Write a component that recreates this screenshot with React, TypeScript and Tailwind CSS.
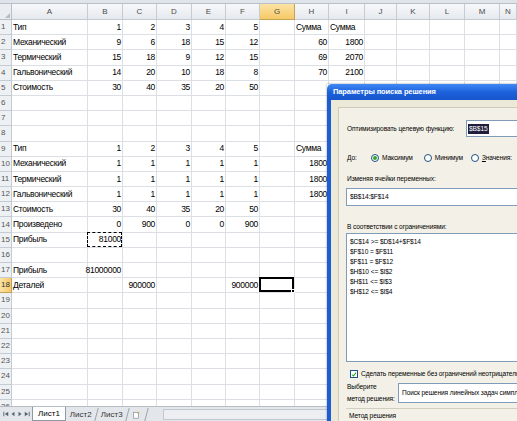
import React from "react";

type Cell = { v: string; text?: boolean };

const COLS = ["A", "B", "C", "D", "E", "F", "G", "H", "I", "J", "K", "L", "M", "N"];

const n = (v: string): Cell => ({ v });
const t = (v: string): Cell => ({ v, text: true });

// sheet contents, by row number
const sheet: Record<number, Record<string, Cell>> = {
  1: { A: t("Тип"), B: n("1"), C: n("2"), D: n("3"), E: n("4"), F: n("5"), H: t("Сумма"), I: t("Сумма") },
  2: { A: t("Механический"), B: n("9"), C: n("6"), D: n("18"), E: n("15"), F: n("12"), H: n("60"), I: n("1800") },
  3: { A: t("Термический"), B: n("15"), C: n("18"), D: n("9"), E: n("12"), F: n("15"), H: n("69"), I: n("2070") },
  4: { A: t("Гальвонический"), B: n("14"), C: n("20"), D: n("10"), E: n("18"), F: n("8"), H: n("70"), I: n("2100") },
  5: { A: t("Стоимость"), B: n("30"), C: n("40"), D: n("35"), E: n("20"), F: n("50") },
  9: { A: t("Тип"), B: n("1"), C: n("2"), D: n("3"), E: n("4"), F: n("5"), H: t("Сумма") },
  10: { A: t("Механический"), B: n("1"), C: n("1"), D: n("1"), E: n("1"), F: n("1"), H: n("1800") },
  11: { A: t("Термический"), B: n("1"), C: n("1"), D: n("1"), E: n("1"), F: n("1"), H: n("1800") },
  12: { A: t("Гальвонический"), B: n("1"), C: n("1"), D: n("1"), E: n("1"), F: n("1"), H: n("1800") },
  13: { A: t("Стоимость"), B: n("30"), C: n("40"), D: n("35"), E: n("20"), F: n("50") },
  14: { A: t("Произведено"), B: n("0"), C: n("900"), D: n("0"), E: n("0"), F: n("900") },
  15: { A: t("Прибыль"), B: n("81000") },
  17: { A: t("Прибыль"), B: n("81000000") },
  18: { A: t("Деталей"), C: n("900000"), F: n("900000") },
};

const constraints = [
  "$C$14 >= $D$14+$F$14",
  "$F$10 = $F$11",
  "$F$11 = $F$12",
  "$H$10 <= $I$2",
  "$H$11 <= $I$3",
  "$H$12 <= $I$4",
];

const gridCols =
  "grid grid-cols-[12px_76px_35px_34px_35px_34px_34px_35px_34px_36px_32px_33px_35px_35px_17px]";

function Radio({ on }: { on?: boolean }) {
  return (
    <span className="w-[8px] h-[8px] rounded-full border border-[#1c5180] bg-white flex items-center justify-center">
      {on && <span className="w-[4px] h-[4px] rounded-full bg-[#2fa82f]" />}
    </span>
  );
}

function SolverDialog() {
  return (
    <div className="absolute left-[327px] top-[84px] w-[330px] h-[337px] flex flex-col text-black shadow-[0_0_2px_rgba(0,0,0,0.4)]">
      <div className="h-[21px] rounded-t-[5px] bg-gradient-to-b from-[#3f8af5] via-[#1d61dc] to-[#1655cc] flex items-center pl-[6px]">
        <span className="text-white text-[7.5px] font-bold tracking-[-0.1px]">Параметры поиска решения</span>
      </div>
      <div className="flex-1 border-l-[4px] border-[#1c5dd6] bg-[#ece9d8] pl-[7px] pt-[7px]">
        <div className="h-full border-l border-t border-[#cfcbbb] bg-[#f3f1e7] pl-[7px] pt-[12px] text-[6.6px] tracking-[-0.1px]">
          <div className="flex items-center h-[17px]">
            <span className="w-[120px] pl-[1px]">Оптимизировать целевую функцию:</span>
            <div className="flex-1 h-full border border-[#7f9db9] bg-white flex items-center pl-[1px]">
              <span className="bg-[#1e1e3c] text-white px-[1px]">$B$15</span>
            </div>
          </div>

          <div className="flex items-center h-[12px] mt-[15px] pl-[1px]">
            <span className="w-[24px]">До:</span>
            <span className="flex items-center gap-[3px] mr-[11px]">
              <Radio on />
              Максимум
            </span>
            <span className="flex items-center gap-[3px] mr-[8px]">
              <Radio />
              Минимум
            </span>
            <span className="flex items-center gap-[3px]">
              <Radio />
              <span>
                <span className="underline">З</span>начения:
              </span>
            </span>
          </div>

          <div className="h-[10px] mt-[10px] pl-[1px] flex items-center">Изменяя ячейки переменных:</div>
          <div className="h-[18px] mt-[4px] border border-[#7f9db9] bg-white flex items-center pl-[3px]">
            $B$14:$F$14
          </div>

          <div className="h-[10px] mt-[16px] pl-[1px] flex items-center">В соответствии с ограничениями:</div>
          <div className="h-[129px] mt-[1px] border border-[#7f9db9] bg-white pl-[3px] pt-[3px] leading-[10px]">
            {constraints.map((c) => (
              <div key={c} className="whitespace-nowrap">
                {c}
              </div>
            ))}
          </div>

          <div className="flex items-center h-[10px] mt-[7px] pl-[4px] gap-[3px] whitespace-nowrap">
            <span className="w-[8px] h-[8px] border border-[#1c5180] bg-white flex items-center justify-center">
              <svg viewBox="0 0 8 8" className="w-[7px] h-[7px]">
                <path d="M1.2 4 L3.2 6 L6.8 1.6" fill="none" stroke="#21a121" strokeWidth="1.4" />
              </svg>
            </span>
            Сделать переменные без ограничений неотрицательными
          </div>

          <div className="flex items-center h-[20px] mt-[4px]">
            <div className="w-[52px] pl-[1px] leading-[12px]">
              <div>Выберите</div>
              <div>метод решения:</div>
            </div>
            <div className="flex-1 h-full border border-[#7f9db9] bg-white flex items-center pl-[3px] whitespace-nowrap">
              Поиск решения линейных задач симплекс-методом
            </div>
          </div>

          <div className="mt-[5px] border-t border-[#d0d0bf] pl-[3px] pt-[2px]">Метод решения</div>
        </div>
      </div>
    </div>
  );
}

function SheetTabs() {
  return (
    <div className="h-[15px] flex items-center bg-[#e3e7ec] border-t border-[#b6bcc4] text-[8px]">
      <div className="w-[32px] flex items-center justify-around px-[2px] text-[#555]">
        <svg viewBox="0 0 8 8" className="w-[6px] h-[6px]">
          <rect x="0.5" y="1" width="1.2" height="6" fill="#5a6470" />
          <path d="M7 1 L2.4 4 L7 7 Z" fill="#5a6470" />
        </svg>
        <svg viewBox="0 0 8 8" className="w-[6px] h-[6px]">
          <path d="M6 1 L2 4 L6 7 Z" fill="#5a6470" />
        </svg>
        <svg viewBox="0 0 8 8" className="w-[6px] h-[6px]">
          <path d="M2 1 L6 4 L2 7 Z" fill="#5a6470" />
        </svg>
        <svg viewBox="0 0 8 8" className="w-[6px] h-[6px]">
          <path d="M1 1 L5.6 4 L1 7 Z" fill="#5a6470" />
          <rect x="6.3" y="1" width="1.2" height="6" fill="#5a6470" />
        </svg>
      </div>
      <div className="flex items-end h-full">
        <div className="h-full px-[5px] bg-white border-x border-b border-[#8f98a3] flex items-center">
          Лист1
        </div>
        <div className="h-[13px] px-[4px] border-r border-[#9aa3ad] skew-x-[-15deg] flex items-center text-[#333]">
          <span className="skew-x-[15deg]">Лист2</span>
        </div>
        <div className="h-[13px] px-[4px] border-r border-[#9aa3ad] skew-x-[-15deg] flex items-center text-[#333]">
          <span className="skew-x-[15deg]">Лист3</span>
        </div>
        <div className="h-[13px] px-[5px] border-r border-[#9aa3ad] skew-x-[-15deg] flex items-center">
          <svg viewBox="0 0 10 10" className="w-[8px] h-[8px] skew-x-[15deg]">
            <rect x="1" y="2" width="6" height="7" fill="#fff" stroke="#7d8792" strokeWidth="0.8" />
            <path d="M6 1 L8 3 M8 1 L6 3" stroke="#e0a020" strokeWidth="1" />
          </svg>
        </div>
      </div>
      <div className="ml-[16px] flex-1 h-[11px] bg-[#eceef1] border border-[#c1c7cf] flex justify-end">
        <div className="w-[6px] h-full border-l border-[#8e98a3] bg-[#d5dbe2]" />
      </div>
    </div>
  );
}

export default function App() {
  const rows = Array.from({ length: 26 }, (_, i) => i + 1);

  return (
    <div className="relative w-[517px] h-[421px] overflow-hidden bg-white font-['Liberation_Sans',Arial,sans-serif] text-black">
      <div className="h-[4px] bg-[#dfe4ea] border-b border-[#b9c0c8]" />

      {/* column headers */}
      <div className={`${gridCols} h-[16px] text-[8px] text-[#4c4c4c]`}>
        <div className="bg-[#e9edf1] border-r border-b border-[#b9bfc6] relative">
          <svg viewBox="0 0 6 6" className="absolute right-[1px] bottom-[1px] w-[5px] h-[5px]">
            <path d="M6 0 L6 6 L0 6 Z" fill="#b5bcc4" />
          </svg>
        </div>
        {COLS.map((c) => (
          <div
            key={c}
            className={
              c === "G"
                ? "bg-gradient-to-b from-[#fbe3a4] to-[#f6c965] border-r border-b border-[#c2a257] flex items-center justify-center"
                : "bg-gradient-to-b from-[#f7f8fa] to-[#e5e9ee] border-r border-b border-[#c5cbd2] flex items-center justify-center"
            }
          >
            {c}
          </div>
        ))}
      </div>

      {/* sheet body */}
      <div className="h-[386px] overflow-hidden">
        {rows.map((r) => (
          <div key={r} className={`${gridCols} h-[15.2px] text-[8.5px] tracking-[-0.3px]`}>
            <div
              className={
                r === 18
                  ? "bg-gradient-to-r from-[#fbe3a4] to-[#f6c965] border-r border-b border-[#c2a257] text-[8px] tracking-normal text-[#333] pl-[1px] flex items-center"
                  : "bg-[#eef1f4] border-r border-b border-[#c5cbd2] text-[8px] tracking-normal text-[#555] pl-[1px] flex items-center"
              }
            >
              {r}
            </div>
            {COLS.map((c) => {
              const cell = sheet[r]?.[c];
              const selected = r === 18 && c === "G";
              const copied = r === 15 && c === "B";
              return (
                <div
                  key={c}
                  className={`relative border-r border-b border-[#dcdfe3] flex items-center whitespace-nowrap ${
                    cell && !cell.text ? "justify-end pr-[1px]" : "justify-start pl-[1px]"
                  }`}
                >
                  {cell?.v}
                  {selected && (
                    <div className="absolute -left-[1px] -top-[1px] right-0 bottom-0 border-2 border-black">
                      <div className="absolute -right-[3px] -bottom-[3px] w-[4px] h-[4px] bg-black border border-white" />
                    </div>
                  )}
                  {copied && (
                    <div className="absolute -left-[1px] -top-[1px] right-0 bottom-0 border-[1.5px] border-dashed border-black" />
                  )}
                </div>
              );
            })}
          </div>
        ))}
      </div>

      <SheetTabs />

      <SolverDialog />
    </div>
  );
}
